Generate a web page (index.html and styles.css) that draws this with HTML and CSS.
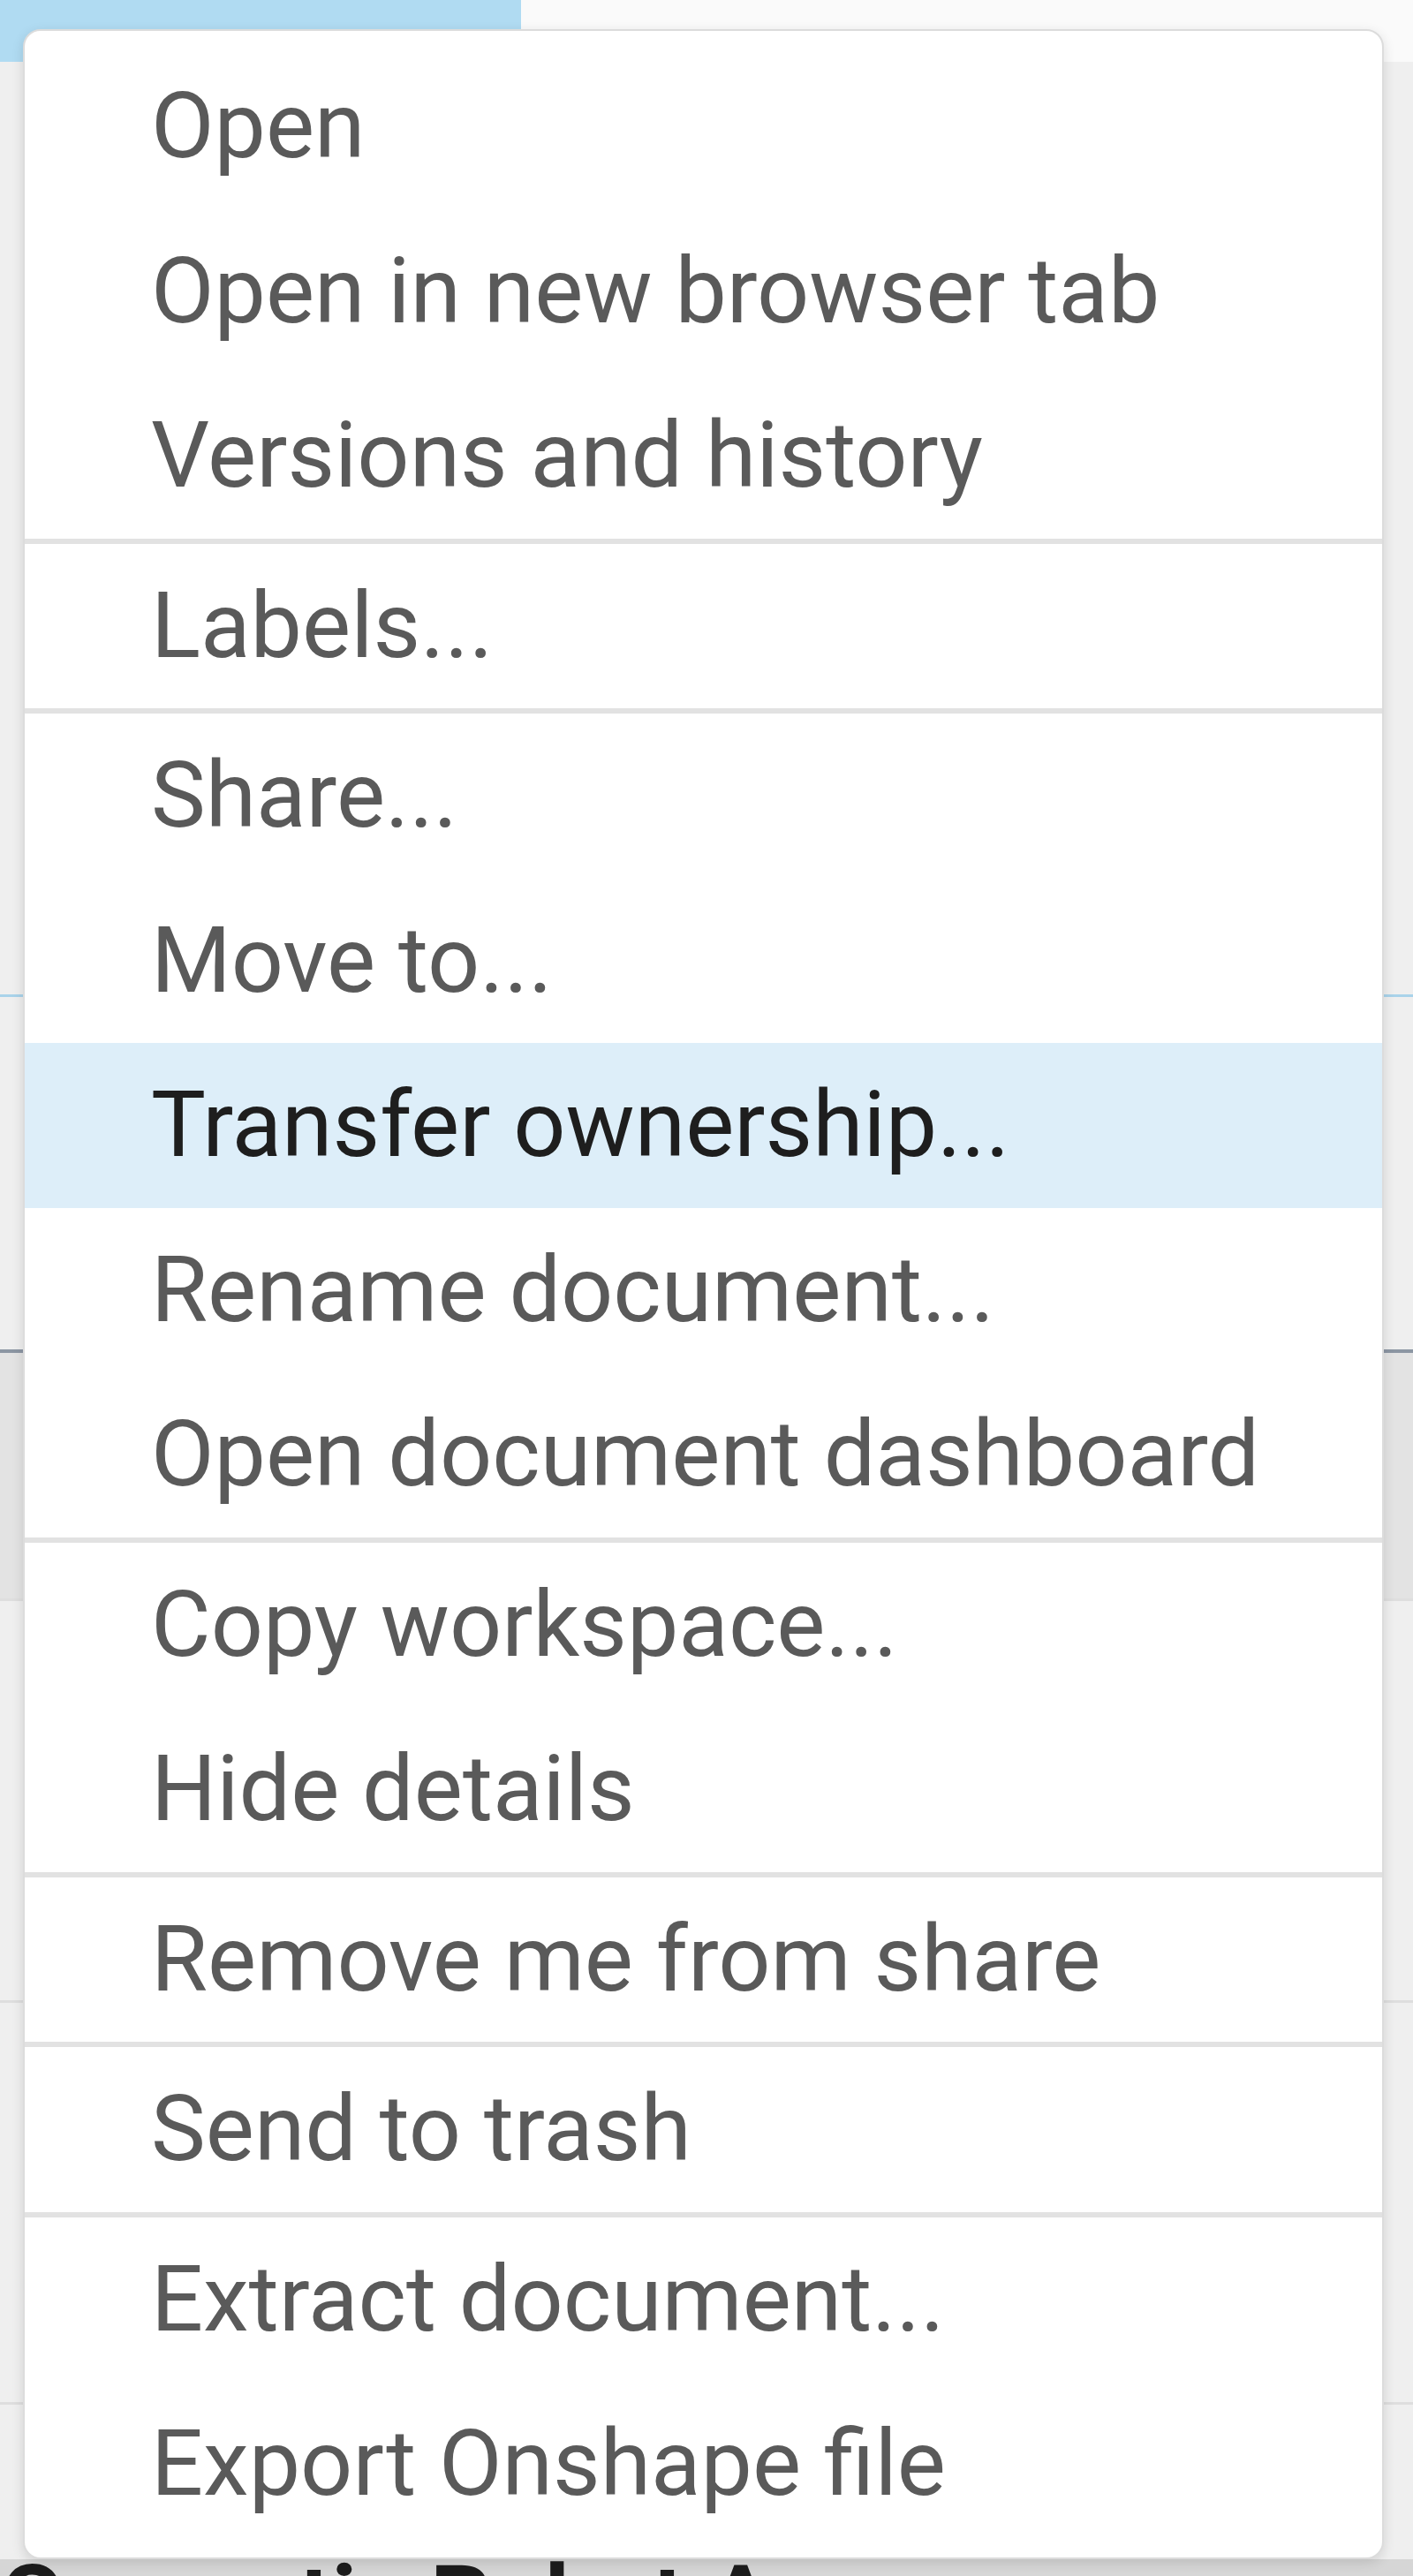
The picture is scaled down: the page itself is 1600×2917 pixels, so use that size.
FILE: index.html
```html
<!doctype html>
<html lang="en">
  <head>
    <meta charset="UTF-8" />
    <meta name="viewport" content="width=device-width, initial-scale=1.0" />
    <title>Document menu</title>
    <link rel="stylesheet" href="styles.css">
  </head>
  <body>
    <div class="page">
      <div class="topbar">
        <div class="tab selected"></div>
        <div class="tab"></div>
      </div>

      <div class="doc-list">
        <div class="doc-row first"></div>
        <div class="doc-row second"></div>
        <div class="doc-row active"></div>
        <div class="doc-row"></div>
        <div class="doc-row"></div>
        <div class="doc-row short"></div>
        <div class="doc-row title-row">
          <span class="doc-title">Cosmetic Robot Arm</span>
        </div>
      </div>
    </div>

    <div class="context-menu">
      <div class="menu-section">
        <div class="menu-item">Open</div>
        <div class="menu-item">Open in new browser tab</div>
        <div class="menu-item">Versions and history</div>
      </div>
      <div class="menu-section">
        <div class="menu-item">Labels...</div>
      </div>
      <div class="menu-section">
        <div class="menu-item">Share...</div>
        <div class="menu-item">Move to...</div>
        <div class="menu-item hover">Transfer ownership...</div>
        <div class="menu-item">Rename document...</div>
        <div class="menu-item">Open document dashboard</div>
      </div>
      <div class="menu-section">
        <div class="menu-item">Copy workspace...</div>
        <div class="menu-item">Hide details</div>
      </div>
      <div class="menu-section">
        <div class="menu-item">Remove me from share</div>
      </div>
      <div class="menu-section">
        <div class="menu-item">Send to trash</div>
      </div>
      <div class="menu-section">
        <div class="menu-item">Extract document...</div>
        <div class="menu-item">Export Onshape file</div>
      </div>
    </div>
  </body>
</html>
```

FILE: styles.css
```css
* {
  margin: 0;
  padding: 0;
  box-sizing: border-box;
  font-family: Roboto, "Noto Sans", sans-serif;
}

body {
  width: 1600px;
  height: 2917px;
  overflow: hidden;
  background: #efefef;
  position: relative;
}

/* page behind the menu */
.page {
  display: flex;
  flex-direction: column;
  height: 100%;
}

.topbar {
  display: flex;
  flex-shrink: 0;
  height: 70px;
}

.tab {
  flex: 1;
  background: #fafafa;
}

.tab.selected {
  flex: 0 0 590px;
  background: #b0dbf2;
}

.doc-list {
  flex: 1;
  display: flex;
  flex-direction: column;
}

.doc-row {
  flex-shrink: 0;
  height: 455px;
  border-bottom: 3px solid #dedede;
}

.doc-row.first {
  height: 1059px;
  border-bottom-color: #a9d3ea;
}

.doc-row.second {
  height: 403px;
  border-bottom: 4px solid #8c96a3;
}

.doc-row.active {
  height: 281px;
  background: #e3e3e3;
}

.doc-row.short {
  height: 175px;
  border-bottom: none;
}

.doc-row.title-row {
  flex: 1;
  height: auto;
  background: #d6d6d6;
  border-bottom: none;
  overflow: hidden;
}

.doc-title {
  display: block;
  margin-top: -8px;
  font-size: 108px;
  font-weight: 700;
  line-height: 1;
  color: #1c1c1c;
  white-space: nowrap;
}

/* context menu */
.context-menu {
  position: absolute;
  left: 26px;
  top: 33px;
  width: 1541px;
  padding: 15px 0 12px;
  background: #fff;
  border: 2px solid #dcdcdc;
  border-radius: 20px;
  box-shadow: 0 4px 14px rgba(0, 0, 0, 0.12);
  overflow: hidden;
}

.menu-section + .menu-section {
  border-top: 6px solid #e2e2e2;
}

.menu-item {
  height: 186.5px;
  line-height: 186.5px;
  padding-left: 143px;
  font-size: 104px;
  color: #5a5a5a;
  white-space: nowrap;
}

.menu-item.hover {
  background: #ddeef9;
  color: #1e1e1e;
}
```
